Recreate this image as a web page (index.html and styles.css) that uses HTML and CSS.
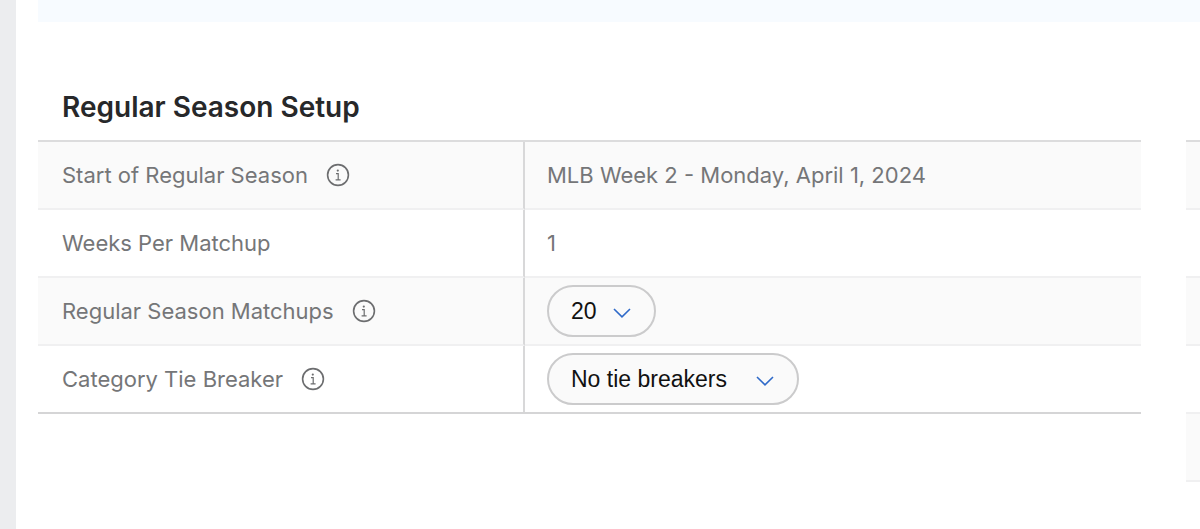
FILE: index.html
```html
<!DOCTYPE html>
<html lang="en">
<head>
    <meta charset="UTF-8">
    <meta name="viewport" content="width=device-width, initial-scale=1.0">
    <title>Regular Season Setup</title>
    <link rel="stylesheet" href="styles.css">
</head>
<body>

    <svg class="sprite" aria-hidden="true">
        <symbol id="info" viewBox="0 0 24 24">
            <circle cx="12" cy="12" r="10.4" fill="none" stroke="currentColor" stroke-width="1.6"/>
            <circle cx="11.8" cy="7.6" r="1.1" fill="currentColor"/>
            <path d="M10 10.7h2.2v6M9.6 16.8h5" fill="none" stroke="currentColor" stroke-width="1.2"/>
        </symbol>
        <symbol id="chevron" viewBox="0 0 18 10">
            <path d="M1 1l8 7.8L17 1" fill="none" stroke="currentColor" stroke-width="1.6"/>
        </symbol>
    </svg>

    <main class="page">
        <div class="banner"></div>

        <div class="columns">
            <section>
                <h2>Regular Season Setup</h2>
                <table class="settings">
                    <tr>
                        <th scope="row">
                            <span class="name">Start of Regular Season <svg class="info"><use href="#info"/></svg></span>
                        </th>
                        <td>MLB Week 2 - Monday, April 1, 2024</td>
                    </tr>
                    <tr>
                        <th scope="row"><span class="name">Weeks Per Matchup</span></th>
                        <td>1</td>
                    </tr>
                    <tr>
                        <th scope="row">
                            <label class="name" for="matchups">Regular Season Matchups <svg class="info"><use href="#info"/></svg></label>
                        </th>
                        <td>
                            <div class="dropdown">
                                <select class="short" id="matchups" name="matchups">
                                    <option>20</option>
                                </select>
                                <svg class="chevron"><use href="#chevron"/></svg>
                            </div>
                        </td>
                    </tr>
                    <tr>
                        <th scope="row">
                            <label class="name" for="tiebreaker">Category Tie Breaker <svg class="info"><use href="#info"/></svg></label>
                        </th>
                        <td>
                            <div class="dropdown">
                                <select class="long" id="tiebreaker" name="tiebreaker">
                                    <option>No tie breakers</option>
                                </select>
                                <svg class="chevron"><use href="#chevron"/></svg>
                            </div>
                        </td>
                    </tr>
                </table>
            </section>

            <div class="next">
                <div class="row"></div>
                <div class="row"></div>
                <div class="row"></div>
                <div class="row"></div>
                <div class="row"></div>
            </div>
        </div>
    </main>

</body>
</html>
```

FILE: styles.css
```css
* {
    box-sizing: border-box;
}

body {
    margin: 0;
    font-family: Inter, "Liberation Sans", sans-serif;
    font-size: 22px;
    color: #757678;
    background-color: #ecedef;
}

.sprite {
    display: none;
}

.page {
    min-height: 100vh;
    margin-left: 16px;
    padding-left: 22px;
    background-color: #fff;
}

.banner {
    height: 22px;
    background-color: #f7fbff;
}

.columns {
    display: grid;
    grid-template-columns: 1fr 14px;
    column-gap: 45px;
    padding-top: 66px;
}

h2 {
    margin: 0;
    padding: 0 24px;
    height: 52px;
    font-size: 28px;
    line-height: 38px;
    font-weight: 600;
    color: #27282a;
}

.settings {
    width: 100%;
    border-collapse: separate;
    border-spacing: 0;
    border-top: 2px solid #dcdcdd;
    border-bottom: 2px solid #d5d5d6;
}

.settings th,
.settings td {
    height: 68px;
    padding: 0 24px;
    text-align: left;
    font-weight: 400;
    border-bottom: 2px solid #f0f0f1;
}

.settings td {
    padding-left: 22px;
}

.settings th {
    width: 487px;
    border-right: 2px solid #d8d8d9;
}

.settings tr:nth-child(odd),
.row:nth-child(odd) {
    background-color: #fafafa;
}

.settings tr:last-child th,
.settings tr:last-child td {
    height: 66px;
    border-bottom: none;
}

.name {
    display: flex;
    align-items: center;
    gap: 18px;
}

.info {
    width: 24px;
    height: 24px;
    color: #6c6d6f;
}

.dropdown {
    display: inline-block;
    position: relative;
    vertical-align: middle;
}

select {
    appearance: none;
    display: block;
    height: 52px;
    padding: 0 56px 0 22px;
    border: 2px solid #cbcbcc;
    border-radius: 26px;
    background-color: #fafafa;
    color: #111;
    font-family: "Liberation Sans", Arial, sans-serif;
    font-size: 23px;
}

.short {
    width: 109px;
}

.long {
    width: 252px;
}

.chevron {
    position: absolute;
    top: 23px;
    right: 25px;
    width: 18px;
    height: 10px;
    color: #2f6ac9;
    pointer-events: none;
}

.next {
    margin-top: 52px;
    border-top: 2px solid #dcdcdd;
}

.row {
    height: 68px;
    border-bottom: 2px solid #f0f0f1;
}
```
